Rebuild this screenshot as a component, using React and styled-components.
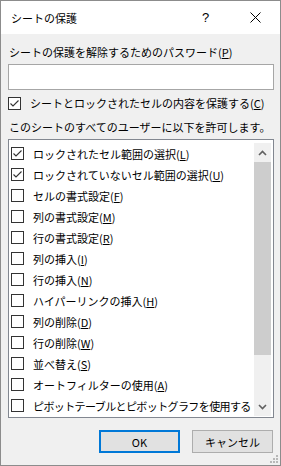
import React from 'react';
import styled, { createGlobalStyle } from 'styled-components';

const GlobalStyle = createGlobalStyle`
  html, body {
    margin: 0;
    padding: 0;
    background: #f0f0f0;
  }
  body {
    font-family: "Noto Sans CJK JP", "Noto Sans", sans-serif;
    font-size: 11px;
    color: #000;
  }
`;

const items = [
  { label: 'ロックされたセル範囲の選択', key: 'L', checked: true },
  { label: 'ロックされていないセル範囲の選択', key: 'U', checked: true },
  { label: 'セルの書式設定', key: 'F' },
  { label: '列の書式設定', key: 'M' },
  { label: '行の書式設定', key: 'R' },
  { label: '列の挿入', key: 'I' },
  { label: '行の挿入', key: 'N' },
  { label: 'ハイパーリンクの挿入', key: 'H' },
  { label: '列の削除', key: 'D' },
  { label: '行の削除', key: 'W' },
  { label: '並べ替え', key: 'S' },
  { label: 'オートフィルターの使用', key: 'A' },
  { label: 'ピボットテーブルとピボットグラフを使用する', tight: true },
];

const Check = ({ checked }) => (
  <Box>
    {checked && (
      <svg width="11" height="11" viewBox="0 0 11 11">
        <polyline points="1.5,5.5 4,8 9.5,2.5" fill="none" stroke="#333" strokeWidth="1.1" />
      </svg>
    )}
  </Box>
);

const Label = ({ text, k }) => (
  <span>
    {text}
    {k && (
      <>
        (<u>{k}</u>)
      </>
    )}
  </span>
);

const App = () => {
  return (
    <>
      <GlobalStyle />
      <Window>
        <TitleBar>
          <Title>シートの保護</Title>
          <Help>?</Help>
          <Close>
            <svg width="11" height="11" viewBox="0 0 11 11">
              <path d="M0.5 0.5 L10.5 10.5 M10.5 0.5 L0.5 10.5" stroke="#000" strokeWidth="1" />
            </svg>
          </Close>
        </TitleBar>
        <Content>
          <Text>
            <Label text="シートの保護を解除するためのパスワード" k="P" />
          </Text>
          <Input />
          <CheckRow>
            <Check checked />
            <Label text="シートとロックされたセルの内容を保護する" k="C" />
          </CheckRow>
          <Text top={10}>このシートのすべてのユーザーに以下を許可します。</Text>
          <List>
            <Rows>
              {items.map((it) => (
                <Row key={it.label} tight={it.tight}>
                  <Check checked={it.checked} />
                  <Label text={it.label} k={it.key} />
                </Row>
              ))}
            </Rows>
            <ScrollBar>
              <Arrow>
                <svg width="9" height="6" viewBox="0 0 9 6">
                  <polyline points="1,5 4.5,1.5 8,5" fill="none" stroke="#606060" strokeWidth="1.6" />
                </svg>
              </Arrow>
              <Thumb />
              <Track />
              <Arrow>
                <svg width="9" height="6" viewBox="0 0 9 6">
                  <polyline points="1,1 4.5,4.5 8,1" fill="none" stroke="#606060" strokeWidth="1.6" />
                </svg>
              </Arrow>
            </ScrollBar>
          </List>
          <Buttons>
            <Button primary>OK</Button>
            <Button>キャンセル</Button>
          </Buttons>
        </Content>
        <Grip>
          <svg width="8" height="8" viewBox="0 0 8 8">
            {[[6, 0], [6, 3], [3, 3], [6, 6], [3, 6], [0, 6]].map(([x, y]) => (
              <rect key={x + '-' + y} x={x} y={y} width="2" height="2" fill="#b8b8b8" />
            ))}
          </svg>
        </Grip>
      </Window>
    </>
  );
};

export default App;

const Window = styled.div`
  position: relative;
  width: 281px;
  height: 466px;
  box-sizing: border-box;
  border: 1px solid #8c8c8c;
  background: #f0f0f0;
  display: flex;
  flex-direction: column;
  overflow: hidden;
`;

const TitleBar = styled.div`
  height: 33px;
  background: #fff;
  display: flex;
  align-items: center;
  padding-left: 10px;
`;

const Title = styled.div`
  flex: 1;
  font-size: 11px;
`;

const Help = styled.div`
  width: 12px;
  margin-right: 36px;
  font-family: "Liberation Sans", sans-serif;
  font-size: 13px;
`;

const Close = styled.div`
  display: flex;
  width: 11px;
  margin-right: 19px;
`;

const Content = styled.div`
  display: flex;
  flex-direction: column;
  padding: 11px 6px 0 7px;
`;

const Text = styled.div`
  height: 14px;
  line-height: 14px;
  margin-top: ${(p) => p.top || 0}px;
  padding-left: 1px;
  white-space: nowrap;
`;

const Input = styled.div`
  height: 26px;
  box-sizing: border-box;
  margin-top: 5px;
  border: 1px solid #a6a6a6;
  background: #fff;
`;

const Box = styled.div`
  width: 13px;
  height: 13px;
  box-sizing: border-box;
  border: 1px solid #333;
  background: #fff;
  display: flex;
  align-items: center;
  justify-content: center;
  flex: none;
`;

const CheckRow = styled.div`
  display: flex;
  align-items: center;
  gap: 9px;
  height: 14px;
  margin-top: 6px;
  line-height: 14px;
  white-space: nowrap;
`;

const List = styled.div`
  height: 279px;
  box-sizing: border-box;
  margin-top: 5px;
  border: 1px solid #828790;
  background: #fff;
  display: flex;
  padding: 3px 2px 1px 1px;
  overflow: hidden;
`;

const Rows = styled.div`
  flex: 1;
  display: flex;
  flex-direction: column;
  overflow: hidden;
`;

const Row = styled.div`
  display: flex;
  align-items: center;
  gap: 9px;
  height: 21px;
  flex: none;
  padding-left: 1px;
  white-space: nowrap;
  letter-spacing: ${(p) => (p.tight ? '-0.6px' : '0')};
`;

const ScrollBar = styled.div`
  width: 17px;
  flex: none;
  display: flex;
  flex-direction: column;
  background: #f0f0f0;
`;

const Arrow = styled.div`
  height: 19px;
  display: flex;
  align-items: center;
  justify-content: center;
`;

const Thumb = styled.div`
  height: 193px;
  background: #cdcdcd;
`;

const Track = styled.div`
  flex: 1;
`;

const Buttons = styled.div`
  display: flex;
  justify-content: flex-end;
  gap: 12px;
  margin-top: 12px;
  padding-right: 1px;
`;

const Button = styled.div`
  width: 81px;
  height: 23px;
  box-sizing: border-box;
  display: flex;
  align-items: center;
  justify-content: center;
  background: #e1e1e1;
  border: 1px solid ${(p) => (p.primary ? '#0078d7' : '#adadad')};
  box-shadow: ${(p) => (p.primary ? 'inset 0 0 0 1px #0078d7' : 'none')};
  font-size: 11px;
`;

const Grip = styled.div`
  position: absolute;
  right: 2px;
  bottom: 2px;
  display: flex;
`;
